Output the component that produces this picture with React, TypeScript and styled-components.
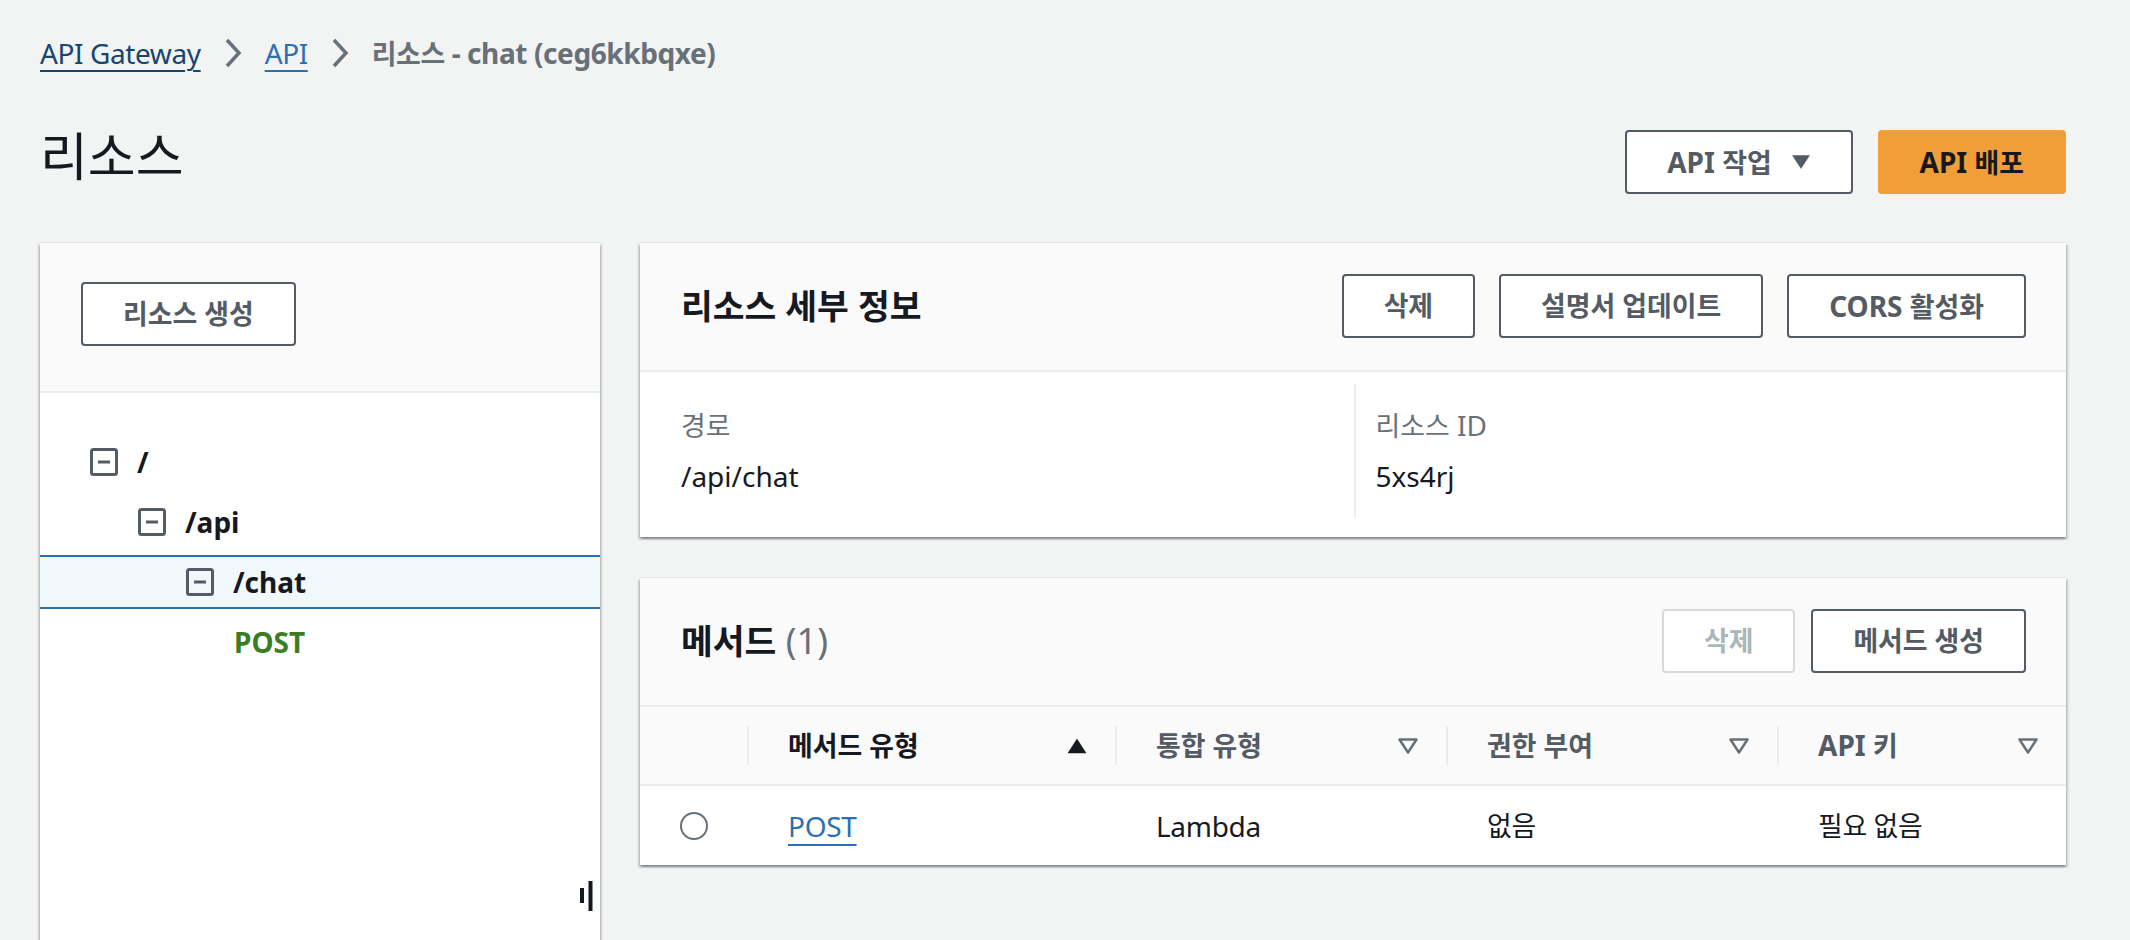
import React from 'react';
import styled, { createGlobalStyle, css } from 'styled-components';

const GlobalStyle = createGlobalStyle`
  * { box-sizing: border-box; }
  html, body { margin: 0; padding: 0; background: #f2f3f3; overflow: hidden; }
  body {
    font-family: "Noto Sans", "Noto Sans CJK KR", sans-serif;
    color: #16191f;
    -webkit-font-smoothing: antialiased;
  }
`;

const Ko = styled.span`
  font-size: 0.96em;
`;

const Page = styled.div`
  width: 2130px;
  height: 940px;
  overflow: hidden;
  padding: 33px 64px 0 40px;
  display: flex;
  flex-direction: column;
`;

/* Breadcrumbs */
const Crumbs = styled.nav`
  display: flex;
  align-items: center;
  gap: 23px;
  height: 40px;
  font-size: 28px;
  line-height: 40px;
  letter-spacing: -0.4px;
`;

const CrumbLink = styled.a<{ $tone: 'dark' | 'blue' }>`
  color: ${(p) => (p.$tone === 'dark' ? '#17466f' : '#2b70b5')};
  text-decoration: underline;
  text-decoration-thickness: 2px;
  text-underline-offset: 6px;
  cursor: pointer;
`;

const CrumbCurrent = styled.span`
  color: #687078;
  font-weight: 700;
`;

const Chevron = () => (
  <svg width="18" height="30" viewBox="0 0 18 30" fill="none">
    <polyline points="3,2 15,15 3,28" stroke="#687078" strokeWidth="3.5" strokeLinejoin="miter" />
  </svg>
);

/* Page header */
const HeaderRow = styled.div`
  margin-top: 57px;
  height: 64px;
  display: flex;
  align-items: center;
  justify-content: space-between;
`;

const Title = styled.h1`
  margin: 0;
  padding-bottom: 12px;
  font-size: 52px;
  line-height: 64px;
  font-weight: 400;
  color: #16191f;
`;

const Actions = styled.div<{ $gap?: number }>`
  display: flex;
  align-items: center;
  gap: ${(p) => p.$gap ?? 24}px;
`;

type Variant = 'normal' | 'primary' | 'disabled';

const Button = styled.button<{ $variant?: Variant }>`
  height: 64px;
  padding: 0 40px;
  border-radius: 4px;
  border: 2px solid #545b64;
  background: #ffffff;
  color: #545b64;
  font-family: inherit;
  font-size: 28px;
  font-weight: 700;
  line-height: 40px;
  display: inline-flex;
  align-items: center;
  gap: 19px;
  white-space: nowrap;
  cursor: pointer;
  ${(p) =>
    p.$variant === 'primary' &&
    css`
      background: #f19e38;
      border-color: #f19e38;
      color: #16191f;
    `}
  ${(p) =>
    p.$variant === 'disabled' &&
    css`
      border-color: #d5dbdb;
      color: #aab7b8;
      cursor: default;
    `}
`;

const Caret = ({ up, filled = true, color = '#545b64' }: { up?: boolean; filled?: boolean; color?: string }) => (
  <svg width="20" height="16" viewBox="0 0 20 16" fill="none">
    {up ? (
      <polygon points="10,1 19,15 1,15" fill={filled ? color : 'none'} stroke={color} strokeWidth={filled ? 0.5 : 2.5} strokeLinejoin="round" />
    ) : (
      <polygon points="1.5,1.5 18.5,1.5 10,14.5" fill={filled ? color : 'none'} stroke={color} strokeWidth={filled ? 0.5 : 2.5} strokeLinejoin="round" />
    )}
  </svg>
);

/* Main layout */
const Layout = styled.div`
  margin-top: 49px;
  display: flex;
  align-items: flex-start;
  gap: 40px;
`;

const panelShadow = css`
  background: #ffffff;
  box-shadow: 0 2px 2px 0 rgba(0, 28, 36, 0.3), 2px 2px 2px 0 rgba(0, 28, 36, 0.15),
    -2px 2px 2px 0 rgba(0, 28, 36, 0.15), 0 -1px 1px 0 rgba(0, 28, 36, 0.06);
`;

const TreePanel = styled.aside`
  ${panelShadow};
  position: relative;
  width: 560px;
  flex: none;
  height: 760px;
`;

const TreeHeader = styled.div`
  background: #fafafa;
  padding: 39px 40px 45px 41px;
  border-bottom: 2px solid #eaeded;
`;

const TreeList = styled.ul`
  list-style: none;
  margin: 0;
  padding: 42px 0 0;
  display: flex;
  flex-direction: column;
  gap: 6px;
`;

const TreeRow = styled.li<{ $level: number; $selected?: boolean }>`
  height: 54px;
  display: flex;
  align-items: center;
  gap: 19px;
  padding-left: ${(p) => 50 + p.$level * 48}px;
  border-top: 2px solid ${(p) => (p.$selected ? '#2b6fb3' : 'transparent')};
  border-bottom: 2px solid ${(p) => (p.$selected ? '#2b6fb3' : 'transparent')};
  background: ${(p) => (p.$selected ? '#f1f8fc' : 'transparent')};
`;

const NodeLabel = styled.span<{ $method?: boolean }>`
  font-size: 28px;
  line-height: 40px;
  font-weight: 700;
  color: ${(p) => (p.$method ? '#3b7d23' : '#16191f')};
`;

const CollapseIcon = () => (
  <svg width="28" height="28" viewBox="0 0 28 28" fill="none">
    <rect x="1.5" y="1.5" width="25" height="25" rx="2" stroke="#545b64" strokeWidth="3" />
    <line x1="8" y1="14" x2="20" y2="14" stroke="#545b64" strokeWidth="3" />
  </svg>
);

const ResizeHandle = styled.svg`
  position: absolute;
  top: 638px;
  right: 7px;
`;

/* Right column */
const Stack = styled.div`
  flex: 1;
  display: flex;
  flex-direction: column;
  gap: 41px;
`;

const Container = styled.section`
  ${panelShadow};
`;

const ContainerHeader = styled.div`
  background: #fafafa;
  padding: 31px 40px 32px 41px;
  border-bottom: 2px solid #eaeded;
  display: flex;
  align-items: center;
  justify-content: space-between;
`;

const HeaderTitle = styled.h2`
  margin: 0;
  font-size: 36px;
  line-height: 48px;
  font-weight: 700;
  color: #16191f;
`;

const Counter = styled.span`
  font-weight: 400;
  color: #687078;
`;

const ContainerBody = styled.div`
  padding: 12px 40px 20px 41px;
`;

const KVGrid = styled.div`
  display: grid;
  grid-template-columns: 1fr 1fr;
`;

const KVColumn = styled.div<{ $divided?: boolean }>`
  padding: 21px 0 21px ${(p) => (p.$divided ? 20 : 0)}px;
  border-left: ${(p) => (p.$divided ? '2px solid #eaeded' : 'none')};
  display: flex;
  flex-direction: column;
  gap: 10px;
`;

const KVLabel = styled.div`
  font-size: 28px;
  line-height: 40px;
  color: #687078;
`;

const KVValue = styled.div`
  font-size: 28px;
  line-height: 40px;
  color: #16191f;
`;

/* Table */
const columns = '107px 368px 331px 331px 1fr';

const TableHead = styled.div`
  display: grid;
  grid-template-columns: ${columns};
  height: 79px;
  background: #fafafa;
  border-bottom: 2px solid #eaeded;
`;

const HeadCell = styled.div`
  display: flex;
  align-items: center;
`;

const Separator = styled.span`
  width: 2px;
  height: 39px;
  background: #eaeded;
  flex: none;
`;

const HeadLabel = styled.span<{ $sorted?: boolean }>`
  flex: 1;
  margin-left: 39px;
  font-size: 28px;
  line-height: 40px;
  font-weight: 700;
  color: ${(p) => (p.$sorted ? '#16191f' : '#545b64')};
`;

const SortSlot = styled.span`
  margin-right: 28px;
  display: flex;
  align-items: center;
`;

const TableRow = styled.div`
  display: grid;
  grid-template-columns: ${columns};
  height: 79px;
  align-items: center;
`;

const Cell = styled.div<{ $pad?: number }>`
  padding-left: ${(p) => p.$pad ?? 41}px;
  font-size: 28px;
  line-height: 40px;
  color: #16191f;
  letter-spacing: -0.3px;
  display: flex;
  align-items: center;
`;

const Radio = styled.span`
  width: 28px;
  height: 28px;
  border-radius: 50%;
  border: 2px solid #687078;
  background: #fff;
`;

const RowLink = styled.a`
  color: #2b70b5;
  text-decoration: underline;
  text-decoration-thickness: 2px;
  text-underline-offset: 7px;
  cursor: pointer;
`;

const headers = [
  { label: <><Ko>메서드 유형</Ko></>, sorted: true },
  { label: <><Ko>통합 유형</Ko></>, sorted: false },
  { label: <><Ko>권한 부여</Ko></>, sorted: false },
  { label: <>API <Ko>키</Ko></>, sorted: false },
];

export default function App() {
  return (
    <>
      <GlobalStyle />
      <Page>
        <Crumbs>
          <CrumbLink $tone="dark">API Gateway</CrumbLink>
          <Chevron />
          <CrumbLink $tone="blue">API</CrumbLink>
          <Chevron />
          <CrumbCurrent>
            <Ko>리소스</Ko> - chat (ceg6kkbqxe)
          </CrumbCurrent>
        </Crumbs>

        <HeaderRow>
          <Title>리소스</Title>
          <Actions $gap={25}>
            <Button>
              <span>
                API <Ko>작업</Ko>
              </span>
              <Caret />
            </Button>
            <Button $variant="primary">
              <span>
                API <Ko>배포</Ko>
              </span>
            </Button>
          </Actions>
        </HeaderRow>

        <Layout>
          <TreePanel>
            <TreeHeader>
              <Button>
                <Ko>리소스 생성</Ko>
              </Button>
            </TreeHeader>
            <TreeList>
              <TreeRow $level={0}>
                <CollapseIcon />
                <NodeLabel>/</NodeLabel>
              </TreeRow>
              <TreeRow $level={1}>
                <CollapseIcon />
                <NodeLabel>/api</NodeLabel>
              </TreeRow>
              <TreeRow $level={2} $selected>
                <CollapseIcon />
                <NodeLabel>/chat</NodeLabel>
              </TreeRow>
              <TreeRow $level={3}>
                <NodeLabel $method>POST</NodeLabel>
              </TreeRow>
            </TreeList>
            <ResizeHandle width="13" height="30" viewBox="0 0 13 30">
              <rect x="0" y="7" width="4" height="15" fill="#16191f" />
              <rect x="8.5" y="0" width="4" height="30" fill="#16191f" />
            </ResizeHandle>
          </TreePanel>

          <Stack>
            <Container>
              <ContainerHeader>
                <HeaderTitle>
                  <Ko>리소스 세부 정보</Ko>
                </HeaderTitle>
                <Actions $gap={24}>
                  <Button>
                    <Ko>삭제</Ko>
                  </Button>
                  <Button>
                    <Ko>설명서 업데이트</Ko>
                  </Button>
                  <Button>
                    <span>
                      CORS <Ko>활성화</Ko>
                    </span>
                  </Button>
                </Actions>
              </ContainerHeader>
              <ContainerBody>
                <KVGrid>
                  <KVColumn>
                    <KVLabel>
                      <Ko>경로</Ko>
                    </KVLabel>
                    <KVValue>/api/chat</KVValue>
                  </KVColumn>
                  <KVColumn $divided>
                    <KVLabel>
                      <Ko>리소스</Ko> ID
                    </KVLabel>
                    <KVValue>5xs4rj</KVValue>
                  </KVColumn>
                </KVGrid>
              </ContainerBody>
            </Container>

            <Container>
              <ContainerHeader>
                <HeaderTitle>
                  <Ko>메서드</Ko> <Counter>(1)</Counter>
                </HeaderTitle>
                <Actions $gap={16}>
                  <Button $variant="disabled">
                    <Ko>삭제</Ko>
                  </Button>
                  <Button>
                    <Ko>메서드 생성</Ko>
                  </Button>
                </Actions>
              </ContainerHeader>
              <TableHead>
                <HeadCell />
                {headers.map((h, i) => (
                  <HeadCell key={i}>
                    <Separator />
                    <HeadLabel $sorted={h.sorted}>{h.label}</HeadLabel>
                    <SortSlot>
                      {h.sorted ? <Caret up color="#16191f" /> : <Caret filled={false} color="#687078" />}
                    </SortSlot>
                  </HeadCell>
                ))}
              </TableHead>
              <TableRow>
                <Cell $pad={40}>
                  <Radio />
                </Cell>
                <Cell>
                  <RowLink>POST</RowLink>
                </Cell>
                <Cell>Lambda</Cell>
                <Cell>
                  <Ko>없음</Ko>
                </Cell>
                <Cell>
                  <Ko>필요 없음</Ko>
                </Cell>
              </TableRow>
            </Container>
          </Stack>
        </Layout>
      </Page>
    </>
  );
}
